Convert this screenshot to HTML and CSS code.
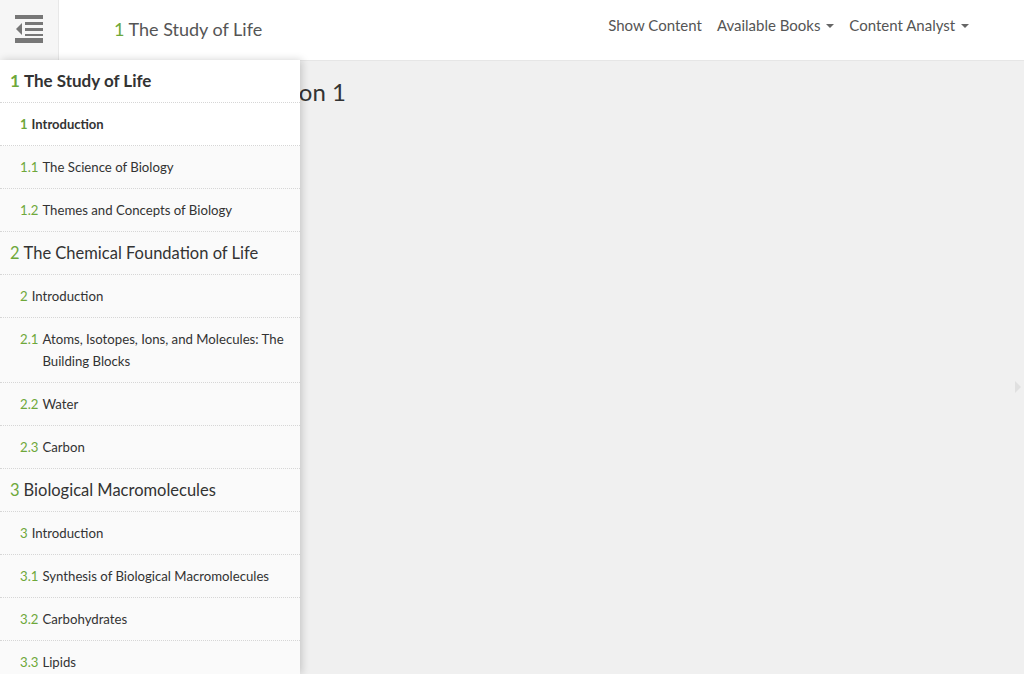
FILE: index.html
```html
<!DOCTYPE html>
<html>
<head>
<meta charset="utf-8">
<link rel="stylesheet" href="styles.css">
</head>
<body>
<header class="topbar">
  <button class="toggle" aria-label="Toggle menu">
    <svg width="30" height="30" viewBox="0 0 30 30">
      <rect x="0" y="0" width="28" height="4" fill="#777"/>
      <rect x="10" y="7" width="18" height="3" fill="#777"/>
      <rect x="10" y="13" width="18" height="3" fill="#777"/>
      <rect x="10" y="19" width="18" height="2" fill="#777"/>
      <polygon points="7,8 7,20 1,14" fill="#777"/>
      <rect x="0" y="23" width="28" height="5" fill="#777"/>
    </svg>
  </button>
  <div class="brand"><span class="num">1</span> The Study of Life</div>
  <nav class="menu">
    <a>Show Content</a>
    <a>Available Books <span class="caret"></span></a>
    <a>Content Analyst <span class="caret"></span></a>
  </nav>
</header>
<div class="body">
  <aside class="sidebar">
    <div class="item chapter active"><span class="num">1</span> The Study of Life</div>
    <div class="item section current"><span class="num">1</span> Introduction</div>
    <div class="item section"><span class="num">1.1</span> The Science of Biology</div>
    <div class="item section"><span class="num">1.2</span> Themes and Concepts of Biology</div>
    <div class="item chapter"><span class="num">2</span> The Chemical Foundation of Life</div>
    <div class="item section"><span class="num">2</span> Introduction</div>
    <div class="item section"><span class="num">2.1</span><span class="txt">Atoms, Isotopes, Ions, and Molecules: The Building Blocks</span></div>
    <div class="item section"><span class="num">2.2</span> Water</div>
    <div class="item section"><span class="num">2.3</span> Carbon</div>
    <div class="item chapter"><span class="num">3</span> Biological Macromolecules</div>
    <div class="item section"><span class="num">3</span> Introduction</div>
    <div class="item section"><span class="num">3.1</span> Synthesis of Biological Macromolecules</div>
    <div class="item section"><span class="num">3.2</span> Carbohydrates</div>
    <div class="item section"><span class="num">3.3</span> Lipids</div>
  </aside>
  <main class="content">
    <h1 class="title">Section 1</h1>
    <span class="next"></span>
  </main>
</div>
</body>
</html>
```
FILE: styles.css
```css
* { box-sizing: border-box; }
html, body { margin: 0; padding: 0; height: 100%; }
body {
  font-family: Lato, "Open Sans", sans-serif;
  color: #333;
  background: #f0f0f0;
  overflow: hidden;
}
.topbar {
  height: 61px;
  background: #fff;
  border-bottom: 1px solid #e6e6e6;
  display: flex;
  align-items: stretch;
}
.toggle {
  width: 59px;
  height: 60px;
  border: 0;
  border-right: 1px solid #e8e8e8;
  background: #f6f6f6;
  padding: 15px 0 0 15px;
  margin: 0;
  display: flex;
  align-items: flex-start;
  justify-content: flex-start;
}
.toggle svg { display: block; }
.brand {
  margin-left: 55px;
  font-size: 18px;
  line-height: 58px;
  color: #555;
  flex: 1;
}
.num { color: #6ea83a; }
.menu {
  display: flex;
  gap: 15px;
  margin-right: 55px;
  font-size: 15px;
  color: #555;
  line-height: 50px;
}
.menu a { white-space: nowrap; }
.caret {
  display: inline-block;
  width: 0; height: 0;
  border-left: 4px solid transparent;
  border-right: 4px solid transparent;
  border-top: 4px solid #666;
  vertical-align: middle;
  margin-left: 2px;
  position: relative;
  top: -1px;
}
.body { display: flex; height: calc(100% - 61px); position: relative; }
.sidebar {
  position: absolute;
  left: 0; top: -1px;
  width: 300px;
  height: calc(100% + 1px);
  background: #fafafa;
  box-shadow: 2px 0 8px rgba(0,0,0,0.18);
  z-index: 2;
  overflow: hidden;
}
.item {
  border-bottom: 1px dotted #d6d6d6;
  display: flex;
  color: #333;
}
.item .num { margin-right: 4px; flex: none; }
.chapter {
  font-size: 16.5px;
  line-height: 21px;
  padding: 11px 10px 9px 10px;
  height: 43px;
}
.chapter.active { background: #fff; font-weight: 700; font-size: 17px; padding-top: 10px; padding-bottom: 10px; }
.section {
  font-size: 13.2px;
  line-height: 22px;
  padding: 10px 12px 10px 20px;
}
.section.current { background: #fff; font-weight: 700; font-size: 13px; }
.content {
  flex: 1;
  position: relative;
  padding: 0 0 0 247px;
}
.title {
  font-size: 24px;
  font-weight: 400;
  margin: 16px 0 0 0;
  color: #333;
  line-height: 30px;
}
.next {
  position: absolute;
  right: 3px;
  top: 320px;
  width: 0; height: 0;
  border-top: 6px solid transparent;
  border-bottom: 6px solid transparent;
  border-left: 6px solid #e0e0e0;
}
```
